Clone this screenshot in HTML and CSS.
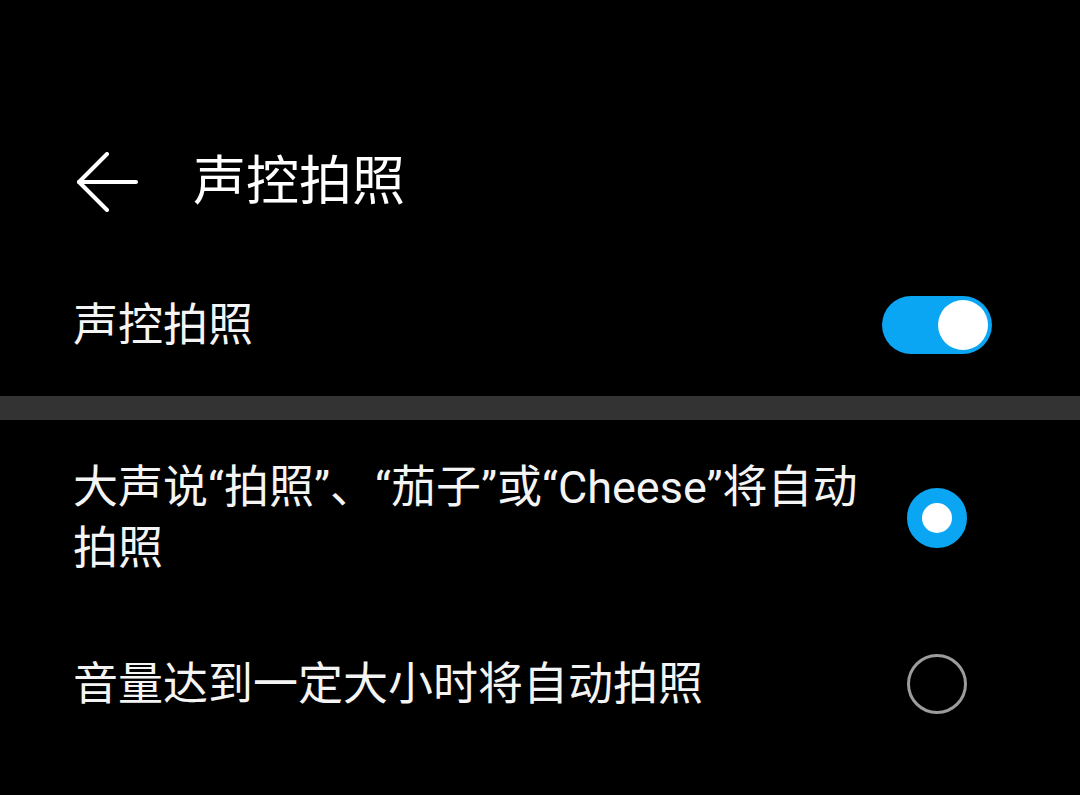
FILE: index.html
```html
<!DOCTYPE html>
<html lang="zh-CN">
<head>
  <meta charset="UTF-8">
  <meta name="viewport" content="width=device-width, initial-scale=1.0">
  <title>声控拍照</title>
  <link rel="stylesheet" href="styles.css">
</head>
<body>

  <header class="appbar">
    <button class="back-button" aria-label="返回">
      <svg width="62" height="60" viewBox="0 0 62 60" fill="none" stroke="#fff" stroke-width="4" stroke-linecap="round" stroke-linejoin="round">
        <path d="M3 30 H60"/>
        <path d="M31 2 L3 30 L31 58"/>
      </svg>
    </button>
    <h1 class="appbar-title">声控拍照</h1>
  </header>

  <div class="setting-row switch-row">
    <span class="setting-label">声控拍照</span>
    <div class="control">
      <label class="switch">
        <input type="checkbox" checked>
        <span class="switch-track"></span>
      </label>
    </div>
  </div>

  <div class="group-divider"></div>

  <div class="setting-row option-row">
    <span class="setting-label">大声说“拍照”、“茄子”或“Cheese”将自动拍照</span>
    <div class="control">
      <span class="radio checked"></span>
    </div>
  </div>

  <div class="setting-row option-row single">
    <span class="setting-label">音量达到一定大小时将自动拍照</span>
    <div class="control">
      <span class="radio"></span>
    </div>
  </div>

</body>
</html>
```

FILE: styles.css
```css
body {
  margin: 0;
  background-color: #000;
  color: #f4f4f4;
  font-family: "Roboto", "Noto Sans CJK SC", sans-serif;
}
.appbar {
  display: flex;
  align-items: center;
  height: 104px;
  margin-top: 130px;
  padding-left: 76px;
}
.back-button {
  background: none;
  border: none;
  padding: 0;
  width: 62px;
  height: 60px;
  cursor: pointer;
}
.back-button svg {
  display: block;
}
.appbar-title {
  margin: 0 0 0 55px;
  font-size: 53px;
  font-weight: 400;
  line-height: 1;
  color: #fff;
}
.setting-row {
  display: flex;
  align-items: center;
  padding-left: 73px;
  padding-right: 88px;
}
.setting-label {
  flex: 1;
  font-size: 45px;
  line-height: 61px;
  padding-right: 14px;
}
.control {
  width: 110px;
  display: flex;
  justify-content: center;
}
.switch-row {
  margin-top: 20px;
  height: 142px;
}
.group-divider {
  height: 24px;
  background-color: #333;
}
.option-row {
  padding-top: 37px;
  padding-bottom: 37px;
}
.option-row.single {
  padding-top: 0;
  padding-bottom: 0;
  height: 136px;
}

/* switch */
.switch {
  position: relative;
  display: block;
  width: 110px;
  height: 58px;
}
.switch input {
  display: none;
}
.switch-track {
  display: block;
  width: 100%;
  height: 100%;
  border-radius: 29px;
  background-color: #5a5a5a;
}
.switch-track::after {
  content: "";
  position: absolute;
  top: 4px;
  left: 4px;
  width: 50px;
  height: 50px;
  border-radius: 50%;
  background-color: #fff;
}
.switch input:checked + .switch-track {
  background-color: #0aa5f3;
}
.switch input:checked + .switch-track::after {
  left: 56px;
}

/* radio */
.radio {
  box-sizing: border-box;
  width: 60px;
  height: 60px;
  border-radius: 50%;
  border: 3px solid #9c9c9c;
}
.radio.checked {
  border: 15px solid #0aa5f3;
  background-color: #fff;
}
```
